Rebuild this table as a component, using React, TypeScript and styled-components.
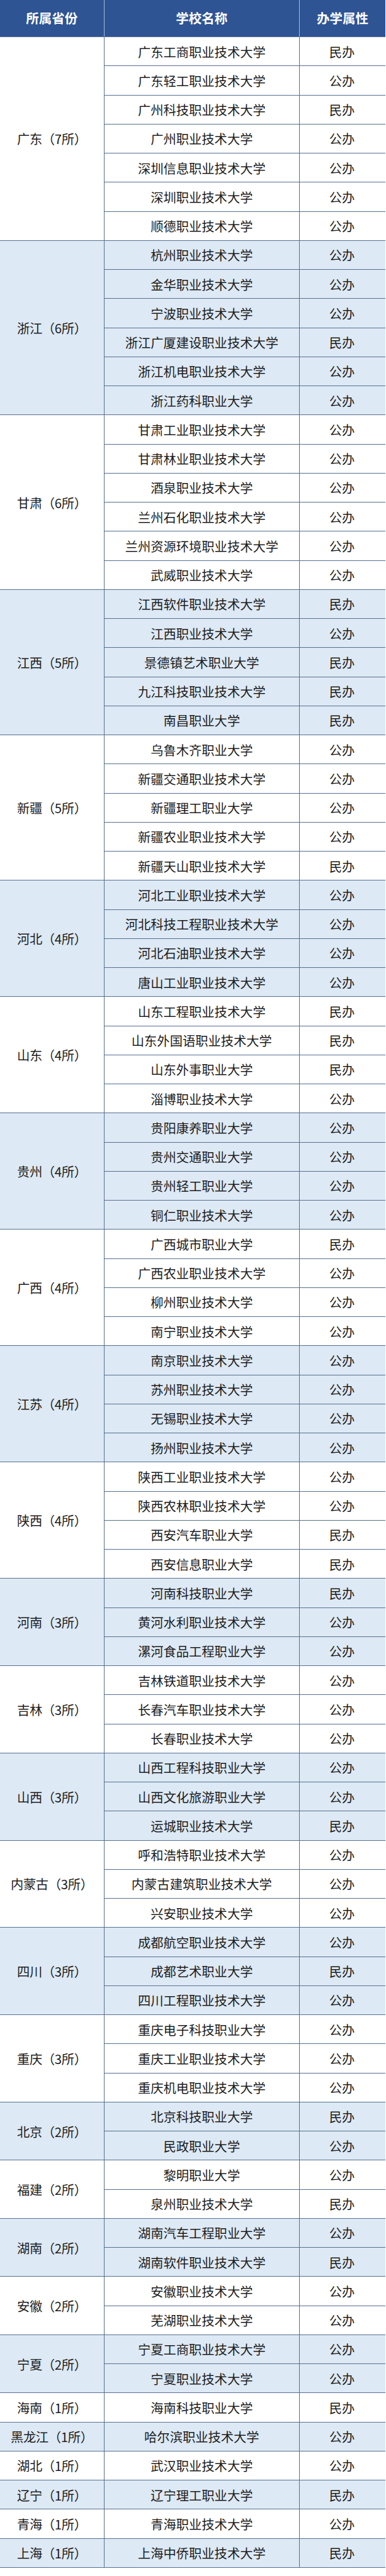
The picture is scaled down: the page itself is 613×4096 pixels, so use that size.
import React from "react";
import styled, { createGlobalStyle } from "styled-components";

const GlobalStyle = createGlobalStyle`
  html, body {
    margin: 0;
    padding: 0;
    background: #ffffff;
  }
  body {
    font-family: "Noto Sans CJK SC", "Noto Sans", sans-serif;
  }
  * { box-sizing: border-box; }
`;

type Kind = "公办" | "民办";
type Group = { name: string; schools: [string, Kind][] };

const DATA: Group[] = [
  { name: "广东", schools: [["广东工商职业技术大学", "民办"], ["广东轻工职业技术大学", "公办"], ["广州科技职业技术大学", "民办"], ["广州职业技术大学", "公办"], ["深圳信息职业技术大学", "公办"], ["深圳职业技术大学", "公办"], ["顺德职业技术大学", "公办"]] },
  { name: "浙江", schools: [["杭州职业技术大学", "公办"], ["金华职业技术大学", "公办"], ["宁波职业技术大学", "公办"], ["浙江广厦建设职业技术大学", "民办"], ["浙江机电职业技术大学", "公办"], ["浙江药科职业大学", "公办"]] },
  { name: "甘肃", schools: [["甘肃工业职业技术大学", "公办"], ["甘肃林业职业技术大学", "公办"], ["酒泉职业技术大学", "公办"], ["兰州石化职业技术大学", "公办"], ["兰州资源环境职业技术大学", "公办"], ["武威职业技术大学", "公办"]] },
  { name: "江西", schools: [["江西软件职业技术大学", "民办"], ["江西职业技术大学", "公办"], ["景德镇艺术职业大学", "民办"], ["九江科技职业技术大学", "民办"], ["南昌职业大学", "民办"]] },
  { name: "新疆", schools: [["乌鲁木齐职业大学", "公办"], ["新疆交通职业技术大学", "公办"], ["新疆理工职业大学", "公办"], ["新疆农业职业技术大学", "公办"], ["新疆天山职业技术大学", "民办"]] },
  { name: "河北", schools: [["河北工业职业技术大学", "公办"], ["河北科技工程职业技术大学", "公办"], ["河北石油职业技术大学", "公办"], ["唐山工业职业技术大学", "公办"]] },
  { name: "山东", schools: [["山东工程职业技术大学", "民办"], ["山东外国语职业技术大学", "民办"], ["山东外事职业大学", "民办"], ["淄博职业技术大学", "公办"]] },
  { name: "贵州", schools: [["贵阳康养职业大学", "公办"], ["贵州交通职业大学", "公办"], ["贵州轻工职业大学", "公办"], ["铜仁职业技术大学", "公办"]] },
  { name: "广西", schools: [["广西城市职业大学", "民办"], ["广西农业职业技术大学", "公办"], ["柳州职业技术大学", "公办"], ["南宁职业技术大学", "公办"]] },
  { name: "江苏", schools: [["南京职业技术大学", "公办"], ["苏州职业技术大学", "公办"], ["无锡职业技术大学", "公办"], ["扬州职业技术大学", "公办"]] },
  { name: "陕西", schools: [["陕西工业职业技术大学", "公办"], ["陕西农林职业技术大学", "公办"], ["西安汽车职业大学", "民办"], ["西安信息职业大学", "民办"]] },
  { name: "河南", schools: [["河南科技职业大学", "民办"], ["黄河水利职业技术大学", "公办"], ["漯河食品工程职业大学", "公办"]] },
  { name: "吉林", schools: [["吉林铁道职业技术大学", "公办"], ["长春汽车职业技术大学", "公办"], ["长春职业技术大学", "公办"]] },
  { name: "山西", schools: [["山西工程科技职业大学", "公办"], ["山西文化旅游职业大学", "公办"], ["运城职业技术大学", "民办"]] },
  { name: "内蒙古", schools: [["呼和浩特职业技术大学", "公办"], ["内蒙古建筑职业技术大学", "公办"], ["兴安职业技术大学", "公办"]] },
  { name: "四川", schools: [["成都航空职业技术大学", "公办"], ["成都艺术职业大学", "民办"], ["四川工程职业技术大学", "公办"]] },
  { name: "重庆", schools: [["重庆电子科技职业大学", "公办"], ["重庆工业职业技术大学", "公办"], ["重庆机电职业技术大学", "公办"]] },
  { name: "北京", schools: [["北京科技职业大学", "民办"], ["民政职业大学", "公办"]] },
  { name: "福建", schools: [["黎明职业大学", "公办"], ["泉州职业技术大学", "民办"]] },
  { name: "湖南", schools: [["湖南汽车工程职业大学", "公办"], ["湖南软件职业技术大学", "民办"]] },
  { name: "安徽", schools: [["安徽职业技术大学", "公办"], ["芜湖职业技术大学", "公办"]] },
  { name: "宁夏", schools: [["宁夏工商职业技术大学", "公办"], ["宁夏职业技术大学", "公办"]] },
  { name: "海南", schools: [["海南科技职业大学", "民办"]] },
  { name: "黑龙江", schools: [["哈尔滨职业技术大学", "公办"]] },
  { name: "湖北", schools: [["武汉职业技术大学", "公办"]] },
  { name: "辽宁", schools: [["辽宁理工职业大学", "民办"]] },
  { name: "青海", schools: [["青海职业技术大学", "公办"]] },
  { name: "上海", schools: [["上海中侨职业技术大学", "民办"]] },
];

const LINE = "#56708f";
const COL1 = 165.7;
const COL2 = 310.3;
const ROW_H = 46.25;

const Table = styled.div`
  width: 612px;
  display: flex;
  flex-direction: column;
  color: #1c1c1c;
  font-size: 20.3px;
  line-height: 1;
`;

const HeaderRow = styled.div`
  height: 59.2px;
  display: grid;
  grid-template-columns: ${COL1}px ${COL2}px 1fr;
  background: #2e5494;
  border-bottom: 1px solid ${LINE};
`;

const HeaderCell = styled.div<{ $last?: boolean }>`
  display: flex;
  align-items: center;
  justify-content: center;
  color: #ffffff;
  font-weight: 700;
  font-size: 20.5px;
  padding-bottom: 2px;
  border-right: ${(p) => (p.$last ? "none" : "1px solid #a9bbd6")};
`;

const GroupRow = styled.div<{ $shade: boolean }>`
  display: flex;
  background: ${(p) => (p.$shade ? "#dde9f5" : "#ffffff")};
`;

const ProvinceCell = styled.div`
  width: ${COL1}px;
  flex: none;
  display: flex;
  align-items: center;
  justify-content: center;
  border-right: 1px solid ${LINE};
  border-bottom: 1px solid ${LINE};
  white-space: nowrap;
  letter-spacing: -0.3px;
`;

const SchoolList = styled.div`
  flex: 1;
  display: flex;
  flex-direction: column;
`;

const SchoolRow = styled.div`
  height: ${ROW_H}px;
  display: grid;
  grid-template-columns: ${COL2}px 1fr;
  border-bottom: 1px solid ${LINE};
`;

const NameCell = styled.div`
  display: flex;
  align-items: center;
  justify-content: center;
  border-right: 1px solid ${LINE};
  white-space: nowrap;
`;

const KindCell = styled.div`
  display: flex;
  align-items: center;
  justify-content: center;
  padding-right: 2px;
`;

export default function App() {
  return (
    <>
      <GlobalStyle />
      <Table>
        <HeaderRow>
          <HeaderCell>所属省份</HeaderCell>
          <HeaderCell>学校名称</HeaderCell>
          <HeaderCell $last>办学属性</HeaderCell>
        </HeaderRow>
        {DATA.map((g, i) => (
          <GroupRow key={g.name} $shade={i % 2 === 1}>
            <ProvinceCell>{`${g.name}（${g.schools.length}所）`}</ProvinceCell>
            <SchoolList>
              {g.schools.map(([name, kind]) => (
                <SchoolRow key={name}>
                  <NameCell>{name}</NameCell>
                  <KindCell>{kind}</KindCell>
                </SchoolRow>
              ))}
            </SchoolList>
          </GroupRow>
        ))}
      </Table>
    </>
  );
}
